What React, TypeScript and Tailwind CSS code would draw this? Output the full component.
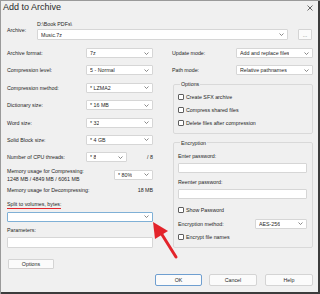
import React from "react";

const Chevron = () => (
    <svg width="5" height="3" viewBox="0 0 5 3" className="shrink-0">
        <polyline points="0.5,0.5 2.5,2.5 4.5,0.5" fill="none" stroke="#6b6b6b" strokeWidth="0.8" />
    </svg>
);

const Select = ({
    value,
    className = "",
}: {
    value: string;
    className?: string;
}) => (
    <div
        className={
            "flex items-center justify-between h-[10px] bg-white border border-[#d6d6d6] rounded-[1px] pl-[3px] pr-[3px] " +
            className
        }
    >
        <span className="truncate">{value}</span>
        <Chevron />
    </div>
);

const Box = ({ className = "" }: { className?: string }) => (
    <div className={"h-[10px] bg-white border border-[#d6d6d6] rounded-[1px] " + className}></div>
);

const Check = ({ label, className = "" }: { label: string; className?: string }) => (
    <div className={"flex items-center gap-[2px] " + className}>
        <span className="w-[6px] h-[6px] bg-white border border-[#5f5f5f] rounded-[1px] shrink-0"></span>
        <span>{label}</span>
    </div>
);

const Row = ({ label, value, selectClass }: { label: string; value: string; selectClass: string }) => (
    <div className="flex items-center justify-between h-[10px]">
        <span>{label}</span>
        <Select value={value} className={selectClass} />
    </div>
);

export default function App() {
    const leftRows = [
        { label: "Archive format:", value: "7z" },
        { label: "Compression level:", value: "5 - Normal" },
        { label: "Compression method:", value: "* LZMA2" },
        { label: "Dictionary size:", value: "* 16 MB" },
        { label: "Word size:", value: "* 32" },
        { label: "Solid Block size:", value: "* 4 GB" },
    ];

    return (
        <div
            className="relative w-[320px] h-[294px] bg-[#f0f0f0] text-[#1f1f1f] text-[5.3px] leading-[8px] flex flex-col overflow-hidden shadow-[inset_1px_1px_0_#9a9a9a,inset_-2px_-2px_0_#3c3c3c]"
            style={{ fontFamily: '"Liberation Sans", Arial, sans-serif' }}
        >
            {/* title bar */}
            <div className="flex items-center justify-between h-[15px] pl-[3px] pr-[7px] shrink-0">
                <span className="text-[9px] leading-[15px] text-[#2a2a2a]">Add to Archive</span>
                <svg width="6" height="6" viewBox="0 0 6 6">
                    <path d="M0.5 0.5 L5.5 5.5 M5.5 0.5 L0.5 5.5" stroke="#444" strokeWidth="0.8" />
                </svg>
            </div>

            {/* archive path */}
            <div className="flex items-center h-[20px] mt-[5px] shrink-0">
                <span className="w-[37px] pl-[7px]">Archive:</span>
                <div className="flex flex-col">
                    <span className="h-[9px] leading-[8px]">D:\Book PDFs\</span>
                    <div className="flex items-center">
                        <Select value="Music.7z" className="w-[251px] h-[11px]" />
                        <div className="ml-[10px] w-[14px] h-[11px] bg-[#fbfbfb] border border-[#d4d4d4] rounded-[1px] flex items-center justify-center text-[#666] leading-[4px]">
                            ...
                        </div>
                    </div>
                </div>
            </div>

            {/* columns */}
            <div className="flex mt-[8px] shrink-0">
                {/* left column */}
                <div className="flex flex-col w-[146px] ml-[7px]">
                    <div className="flex flex-col gap-[7.4px]">
                        {leftRows.map((r) => (
                            <Row key={r.label} label={r.label} value={r.value} selectClass="w-[67px]" />
                        ))}
                        <div className="flex items-center h-[10px]">
                            <span className="w-[79px]">Number of CPU threads:</span>
                            <Select value="* 8" className="w-[41px]" />
                            <span className="ml-auto">/ 8</span>
                        </div>
                    </div>

                    <div className="flex items-center justify-between mt-[4.5px]">
                        <div className="flex flex-col">
                            <span>Memory usage for Compressing:</span>
                            <span>1248 MB / 4849 MB / 6061 MB</span>
                        </div>
                        <Select value="* 80%" className="w-[39px]" />
                    </div>

                    <div className="flex justify-between mt-[3px]">
                        <span>Memory usage for Decompressing:</span>
                        <span>18 MB</span>
                    </div>

                    <div className="mt-[6px] h-[8px]">
                        <span className="inline-block leading-[7px] border-b-[1.5px] border-[#e3242b]">
                            Split to volumes, bytes:
                        </span>
                    </div>
                    <div className="mt-[4px] flex items-center justify-end h-[10px] bg-white border border-[#7fb0d6] rounded-[1px] pr-[3px]">
                        <Chevron />
                    </div>

                    <span className="mt-[4px]">Parameters:</span>
                    <Box className="mt-[3px] h-[11px]" />

                    <div className="mt-[11px] ml-[1px] w-[46px] h-[10px] bg-[#fbfbfb] border border-[#d4d4d4] rounded-[1px] flex items-center justify-center">
                        Options
                    </div>
                </div>

                {/* right column */}
                <div className="flex flex-col w-[141px] ml-[19px]">
                    <div className="flex flex-col gap-[7.4px]">
                        <Row label="Update mode:" value="Add and replace files" selectClass="w-[77px]" />
                        <Row label="Path mode:" value="Relative pathnames" selectClass="w-[77px]" />
                    </div>

                    <fieldset className="mt-[5px] ml-[1px] w-[140px] border border-[#d9d9d9] rounded-[2px] pl-[4px] pb-[3px] pt-[2.5px]">
                        <legend className="px-[1px] ml-[2px] leading-[8px]">Options</legend>
                        <Check label="Create SFX archive" className="h-[13px]" />
                        <Check label="Compress shared files" className="h-[13px]" />
                        <Check label="Delete files after compression" className="h-[13px]" />
                    </fieldset>

                    <fieldset className="mt-[5px] ml-[1px] w-[140px] border border-[#d9d9d9] rounded-[2px] pl-[4px] pr-[5px] pt-[5px] pb-[6px] flex flex-col">
                        <legend className="px-[1px] ml-[2px] leading-[8px]">Encryption</legend>
                        <span>Enter password:</span>
                        <Box className="mt-[3px]" />
                        <span className="mt-[5px]">Reenter password:</span>
                        <Box className="mt-[3px]" />
                        <Check label="Show Password" className="mt-[7px] h-[8px]" />
                        <div className="mt-[5px] flex items-center justify-between h-[10px]">
                            <span>Encryption method:</span>
                            <Select value="AES-256" className="w-[52px]" />
                        </div>
                        <Check label="Encrypt file names" className="mt-[4px] h-[8px]" />
                    </fieldset>
                </div>
            </div>

            {/* bottom buttons */}
            <div className="flex mt-[5px] ml-[155px] gap-[7px] h-[12px] shrink-0">
                <div className="w-[47px] bg-[#fbfbfb] border border-[#6f9fd0] rounded-[2px] flex items-center justify-center">
                    OK
                </div>
                <div className="w-[48px] bg-[#fbfbfb] border border-[#d4d4d4] rounded-[2px] flex items-center justify-center">
                    Cancel
                </div>
                <div className="ml-[1px] w-[48px] bg-[#fbfbfb] border border-[#d4d4d4] rounded-[2px] flex items-center justify-center">
                    Help
                </div>
            </div>

            {/* annotation arrow */}
            <svg className="absolute left-0 top-0 pointer-events-none" width="320" height="294" viewBox="0 0 320 294">
                <line x1="161" y1="233" x2="176" y2="257" stroke="#e3242b" strokeWidth="3" strokeLinecap="round" />
                <polygon points="153,222 155,239 168,231" fill="#e3242b" />
            </svg>
        </div>
    );
}
